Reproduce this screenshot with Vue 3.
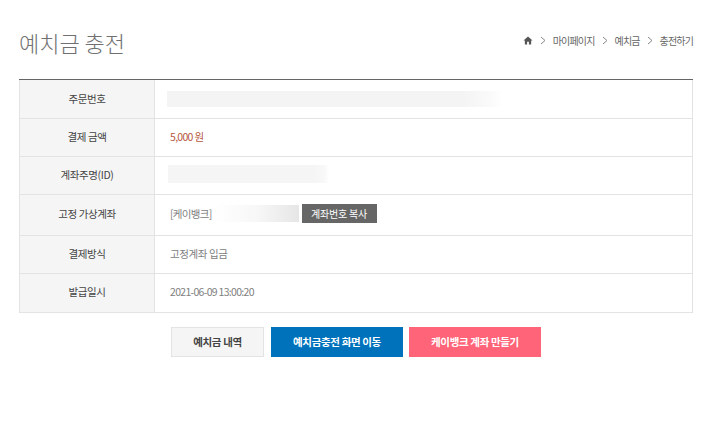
<template>
  <div class="page">
    <div class="head">
      <h1>예치금 충전</h1>
      <div class="crumbs">
        <svg class="home" width="10" height="9" viewBox="0 0 11 10">
          <path d="M5.5 0.5 L0.5 5 H2 V9.5 H4.5 V6.5 H6.5 V9.5 H9 V5 H10.5 Z" fill="#555" />
        </svg>
        <template v-for="crumb in crumbs" :key="crumb">
          <svg class="sep" width="6" height="9" viewBox="0 0 6 9">
            <path d="M1 1 L5 4.5 L1 8" fill="none" stroke="#888" stroke-width="1" />
          </svg>
          <span>{{ crumb }}</span>
        </template>
      </div>
    </div>

    <div class="table-wrap">
      <table>
        <tbody>
          <tr class="row-first">
            <th>주문번호</th>
            <td><div class="blur blur-order"></div></td>
          </tr>
          <tr>
            <th>결제 금액</th>
            <td class="price">5,000 원</td>
          </tr>
          <tr>
            <th>계좌주명(ID)</th>
            <td><div class="blur blur-name"></div></td>
          </tr>
          <tr class="tall">
            <th>고정 가상계좌</th>
            <td>
              <div class="account">
                <span class="bank">[케이뱅크]</span>
                <div class="blur blur-account"></div>
                <button class="btn-copy">계좌번호 복사</button>
              </div>
            </td>
          </tr>
          <tr>
            <th>결제방식</th>
            <td>고정계좌 입금</td>
          </tr>
          <tr class="row-last">
            <th>발급일시</th>
            <td class="date">2021-06-09 13:00:20</td>
          </tr>
        </tbody>
      </table>
    </div>

    <div class="actions">
      <button class="btn btn-list">예치금 내역</button>
      <button class="btn btn-move">예치금충전 화면 이동</button>
      <button class="btn btn-make">케이뱅크 계좌 만들기</button>
    </div>
  </div>
</template>

<script setup>
const crumbs = ["마이페이지", "예치금", "충전하기"];
</script>

<style>
body {
  background: #fff;
}
</style>

<style scoped>
.page {
  width: 720px;
  height: 436px;
  padding: 0 27px 0 19px;
  box-sizing: border-box;
  overflow: hidden;
  font-family: "Noto Sans CJK KR", "Liberation Sans", sans-serif;
  color: #777;
}

.head {
  height: 79px;
  display: flex;
  justify-content: space-between;
  align-items: flex-start;
}

h1 {
  margin: 25px 0 0;
  font-size: 22px;
  line-height: 34px;
  font-weight: 300;
  color: #707070;
}

.crumbs {
  margin-top: 33px;
  display: flex;
  align-items: center;
  font-size: 10px;
  line-height: 15px;
  letter-spacing: -0.85px;
  color: #666;
}

.sep {
  margin: 0 7px 0 7px;
}

.table-wrap {
  border-top: 1px solid #666;
}

table {
  width: 100%;
  border-collapse: collapse;
  table-layout: fixed;
}

th,
td {
  height: 38px;
  padding: 0 0 2px;
  border: 1px solid #e3e3e3;
  font-size: 10.5px;
  box-sizing: border-box;
}

.row-first th,
.row-first td {
  border-top: none;
  padding-bottom: 0;
}

.row-last th,
.row-last td {
  height: 39px;
  padding-bottom: 3px;
}

tr.tall th,
tr.tall td {
  height: 41px;
  padding-bottom: 3px;
}

th {
  width: 135px;
  background: #f5f5f5;
  color: #444;
  font-weight: 400;
  letter-spacing: -0.4px;
}

td {
  padding-left: 15px;
  color: #808080;
  letter-spacing: -0.4px;
}

.price {
  color: #b5563c;
  letter-spacing: -0.7px;
}

.date {
  letter-spacing: -0.7px;
}

.blur {
  background: #f3f3f3;
}

.blur-order {
  width: 336px;
  height: 16px;
  margin-left: -3px;
  background: linear-gradient(to right, #f4f4f4 88%, #fafafa 96%, #fff);
}

.blur-name {
  width: 161px;
  height: 18px;
  margin-left: -2px;
  background: linear-gradient(to right, #f5f5f5 90%, #f8f8f8 97%, #fff);
}

.account {
  display: flex;
  align-items: center;
}

.bank {
  letter-spacing: -0.7px;
}

.blur-account {
  width: 84px;
  height: 17px;
  margin-left: 3px;
  background: linear-gradient(to right, #fff, #f7f7f7 50%, #e6e6e6);
}

.btn-copy {
  width: 75px;
  height: 19px;
  margin-left: 3px;
  padding: 0;
  border: none;
  background: #666;
  color: #fff;
  font-family: inherit;
  font-size: 10px;
  letter-spacing: -0.2px;
}

.actions {
  margin-top: 14px;
  display: flex;
  justify-content: center;
  gap: 6px;
}

.btn {
  height: 30px;
  padding: 0;
  box-sizing: border-box;
  border: none;
  font-family: inherit;
  font-size: 10.5px;
  font-weight: 700;
  letter-spacing: -0.35px;
  color: #fff;
}

.btn-list {
  width: 93px;
  margin-right: 1px;
  background: #f5f5f5;
  border: 1px solid #e3e3e3;
  color: #444;
}

.btn-move {
  width: 132px;
  background: #0072bc;
}

.btn-make {
  width: 132px;
  background: #ff6478;
}
</style>
